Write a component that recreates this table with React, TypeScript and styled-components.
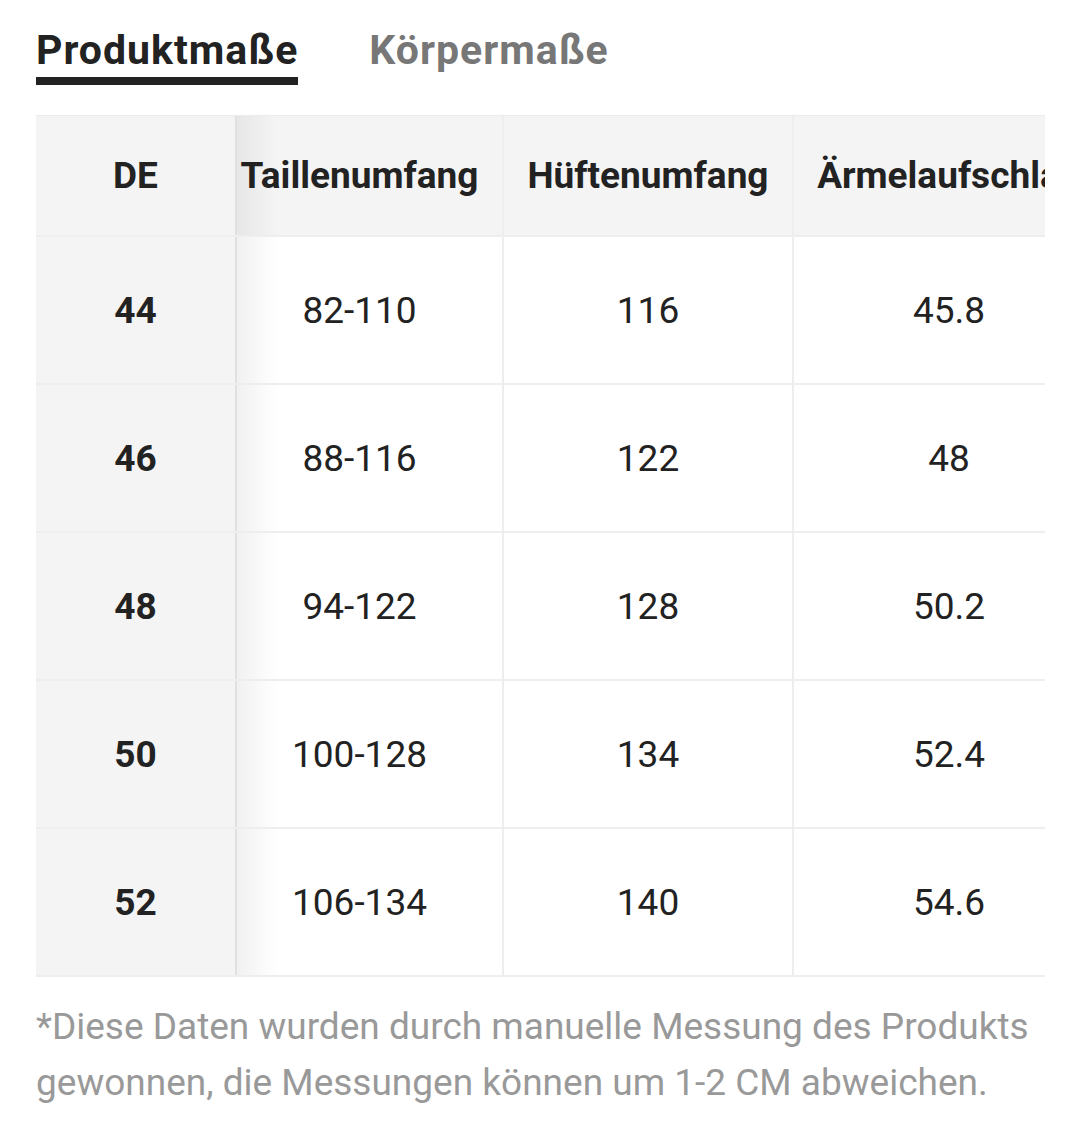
import React from 'react'
import styled, { createGlobalStyle } from 'styled-components'

type SizeRow = {
    size: string
    waist: string
    hip: string
    cuff: string
}

const rows: Array<SizeRow> = [
    { size: '44', waist: '82-110', hip: '116', cuff: '45.8' },
    { size: '46', waist: '88-116', hip: '122', cuff: '48' },
    { size: '48', waist: '94-122', hip: '128', cuff: '50.2' },
    { size: '50', waist: '100-128', hip: '134', cuff: '52.4' },
    { size: '52', waist: '106-134', hip: '140', cuff: '54.6' },
]

const GlobalStyle = createGlobalStyle`
    html, body {
        margin: 0;
        padding: 0;
        background: #ffffff;
        font-family: Roboto, 'Liberation Sans', Arial, sans-serif;
    }
`

const Page = styled.div`
    padding: 22px 0 0 36px;
    width: 1079px;
    box-sizing: border-box;
`

const Tabs = styled.div`
    display: flex;
    gap: 71px;
    height: 93px;
`

const Tab = styled.div<{ $active?: boolean }>`
    box-sizing: border-box;
    height: 63px;
    font-size: 41px;
    font-weight: 700;
    letter-spacing: 1px;
    line-height: 56px;
    color: ${(p) => (p.$active ? '#222222' : '#777777')};
    border-bottom: 8px solid ${(p) => (p.$active ? '#222222' : 'transparent')};
`

const TableViewport = styled.div`
    width: 1009px;
    overflow: hidden;
`

const Grid = styled.div`
    display: grid;
    grid-template-columns: 199px 267px 290px 312px;
    width: 1068px;
    border-top: 1px solid #ececec;
`

const Cell = styled.div<{ $header?: boolean; $shift?: boolean }>`
    display: flex;
    align-items: center;
    justify-content: center;
    box-sizing: border-box;
    height: ${(p) => (p.$header ? '121px' : '148px')};
    padding-right: ${(p) => (p.$shift ? '20px' : '0')};
    background: ${(p) => (p.$header ? '#f4f4f4' : '#ffffff')};
    border-bottom: 2px solid #eeeeee;
    border-left: 2px solid #eeeeee;
    font-size: 37px;
    font-weight: ${(p) => (p.$header ? 700 : 400)};
    color: #222222;
    white-space: nowrap;
`

const StickyCell = styled(Cell)`
    position: relative;
    background: #f4f4f4;
    border-left: none;
    font-weight: 700;
    z-index: 1;

    &::after {
        content: '';
        position: absolute;
        top: 0;
        bottom: 0;
        right: -42px;
        width: 42px;
        background: linear-gradient(to right, rgba(0, 0, 0, 0.06), rgba(0, 0, 0, 0));
        pointer-events: none;
    }
`

const Note = styled.p`
    margin: 22px 0 0;
    padding-right: 30px;
    font-size: 37px;
    line-height: 56px;
    color: #999999;
`

export default function App(): React.ReactElement {
    return (
        <Page>
            <GlobalStyle />
            <Tabs>
                <Tab $active>Produktmaße</Tab>
                <Tab>Körpermaße</Tab>
            </Tabs>
            <TableViewport>
                <Grid>
                    <StickyCell $header>DE</StickyCell>
                    <Cell $header $shift>
                        Taillenumfang
                    </Cell>
                    <Cell $header>Hüftenumfang</Cell>
                    <Cell $header>Ärmelaufschlag</Cell>
                    {rows.map((row) => (
                        <React.Fragment key={row.size}>
                            <StickyCell>{row.size}</StickyCell>
                            <Cell $shift>{row.waist}</Cell>
                            <Cell>{row.hip}</Cell>
                            <Cell>{row.cuff}</Cell>
                        </React.Fragment>
                    ))}
                </Grid>
            </TableViewport>
            <Note>
                *Diese Daten wurden durch manuelle Messung des Produkts gewonnen, die Messungen können um 1-2 CM
                abweichen.
            </Note>
        </Page>
    )
}
